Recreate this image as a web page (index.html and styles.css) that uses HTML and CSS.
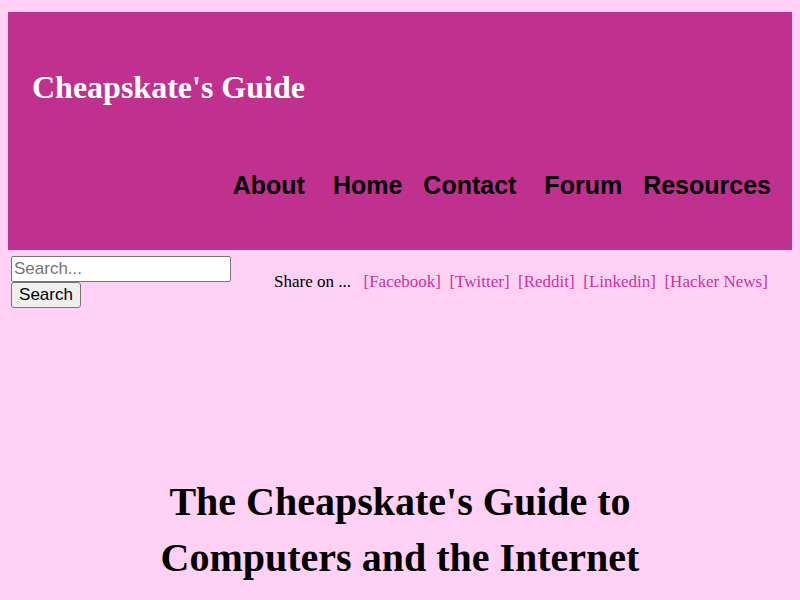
FILE: index.html
```html
<!DOCTYPE html>
<html>
<head>
<meta charset="utf-8">
<link rel="stylesheet" href="styles.css">
</head>
<body>
<header class="masthead">
  <div class="site-title">Cheapskate's Guide</div>
  <nav class="nav">
    <a href="#" class="nav-link">About&nbsp;</a>
    <a href="#" class="nav-link">Home</a>
    <a href="#" class="nav-link">Contact&nbsp;</a>
    <a href="#" class="nav-link">Forum</a>
    <a href="#" class="nav-link">Resources</a>
  </nav>
</header>
<div class="toolbar">
  <form class="search">
    <input class="search-input" type="text" placeholder="Search...">
    <button class="search-btn" type="button">Search</button>
  </form>
  <div class="share">
    <span class="share-label">Share on ...</span>
    <a href="#" class="share-link">[Facebook]</a>
    <a href="#" class="share-link">[Twitter]</a>
    <a href="#" class="share-link">[Reddit]</a>
    <a href="#" class="share-link">[Linkedin]</a>
    <a href="#" class="share-link">[Hacker News]</a>
  </div>
</div>
<main class="content">
  <h1 class="page-title">The Cheapskate's Guide to<br>Computers and the Internet</h1>
</main>
</body>
</html>
```
FILE: styles.css
```css
html, body {
  background: #ffd1f5;
}
body {
  margin: 12px 8px 8px 8px;
  font-family: "Liberation Serif", serif;
  color: #000;
}
.masthead {
  background: #bf308f;
  height: 238px;
  display: flex;
  flex-direction: column;
  box-sizing: border-box;
  padding: 55px 21px 0 24px;
}
.site-title {
  color: #fff;
  font-family: "Liberation Serif", serif;
  font-weight: bold;
  font-size: 32px;
  line-height: 40px;
}
.nav {
  display: flex;
  justify-content: flex-end;
  gap: 21px;
  margin-top: 63px;
}
.nav-link {
  font-family: "Liberation Sans", Arial, sans-serif;
  font-weight: bold;
  font-size: 25px;
  color: #000;
  text-decoration: none;
  line-height: 30px;
}
.toolbar {
  display: flex;
  align-items: flex-start;
  padding: 6px 0 0 3px;
}
.search {
  display: flex;
  flex-direction: column;
  align-items: flex-start;
  margin: 0;
  width: 220px;
}
.search-input {
  width: 220px;
  height: 26px;
  box-sizing: border-box;
  font-family: "Liberation Sans", Arial, sans-serif;
  font-size: 17px;
  padding: 1px 2px;
  border: 1px solid #767676;
  border-radius: 2px;
  background: #fff;
  margin: 0;
}
.search-btn {
  height: 26px;
  width: 70px;
  box-sizing: border-box;
  font-family: "Liberation Sans", Arial, sans-serif;
  font-size: 17px;
  color: #000;
  background: #efefef;
  border: 1px solid #767676;
  border-radius: 3px;
  padding: 0;
  margin: 0;
}
.share {
  margin-left: 43px;
  margin-top: 15px;
  font-size: 17px;
  line-height: 22px;
  display: flex;
  gap: 8.5px;
}
.share-label {
  margin-right: 4px;
}
.share-link {
  color: #c8359b;
  text-decoration: none;
}
.content {
  padding-top: 166px;
}
.page-title {
  margin: 0;
  text-align: center;
  font-size: 40px;
  line-height: 56px;
  font-weight: bold;
}
```
